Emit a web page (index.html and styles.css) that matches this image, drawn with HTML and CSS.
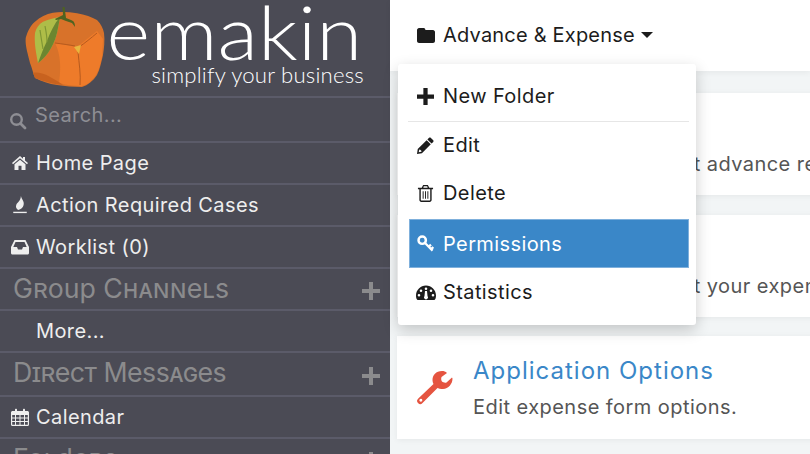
FILE: index.html
```html
<!DOCTYPE html>
<html lang="en">
<head>
<meta charset="utf-8">
<title>emakin</title>
<link rel="stylesheet" href="styles.css">
</head>
<body>
<div class="app">
  <aside class="sidebar">
    <div class="brand">
      <svg class="fruit" viewBox="0 -2 82 84" width="82" height="84" aria-hidden="true">
        <path d="M.7 29C3 21 6 16 10 12.700C15 8 21 5 28 3.700C36 2.500 44 3 52 4.300C60 6 67 8 72 11C76 15 78 19 79 24C80 32 79 39 78 46C76 54 75 60 72 66C68 72 63 76 57 78C48 78 40 77 32 76C24 75 16 72 10 69C8 64 7 59 5 54C3 45 0 37 .7 29Z" fill="#d8722a"/>
        <path d="M30 34L52 38L72 22L78 30L77 48C75 56 74 61 71 66C67 72 62 76 57 77C48 77 40 76 34 74C36 60 36 46 30 34Z" fill="#ee7b2a"/>
        <path d="M8 64C16 62 26 68 38 76C28 75 17 72 10 69Z" fill="#c8621f"/>
        <path d="M30 34C38 35 45 36 50 37M54 38C60 34 66 29 72 24M53 43C54 54 56 66 55 76" fill="none" stroke="#b65a1e" stroke-width="1"/>
        <path d="M49 38L56 36L54 45Z" fill="#e7b63e"/>
        <path d="M13 54C11 44 9 33 10 24C11 19 14 15 18 12.700C24 10 30 9 35 8C34 14 33 19 32 24C30 32 27 38 23 44C20 48 16 52 13 54Z" fill="#aebd48"/>
        <path d="M35 8C34 14 33 19 32 24C30 32 27 38 23 44C20 48 16 52 13 54C16 46 18 40 22 32C25 24 29 15 35 8Z" fill="#6c8630"/>
        <path d="M15 21C16 28 17 34 18 40M20 17C21 22 22 28 22 33" fill="none" stroke="#7f9634" stroke-width="1.200"/>
        <path d="M30 10L38 6L37.500 -2H39.500L41 9L46 11C49 12 50 14 50 18L47 14L41 12L36 10L31 11Z" fill="#4f6320"/>
      </svg>
      <div class="wordmark">
        <span class="wordmark-name">emakin</span>
        <span class="wordmark-tag">simplify your business</span>
      </div>
    </div>
    <div class="search">
      <svg class="search-icon" viewBox="0 0 18 18" width="18" height="18" aria-hidden="true"><circle cx="7.500" cy="7.500" r="5.300" fill="none" stroke="currentColor" stroke-width="2.400"/><path d="M11.500 11.500L16 16" stroke="currentColor" stroke-width="2.800" stroke-linecap="round"/></svg>
      <span>Search...</span>
    </div>
    <a class="nav-row"><svg class="nav-icon" viewBox="0 0 18 16" aria-hidden="true"><path d="M9 1L1 8L2 9.300L9 3.300L16 9.300L17 8L14 5.400V2H12V3.700ZM9 4.700L3.500 9.300V15H7.500V10.800H10.500V15H14.500V9.300Z" fill="currentColor"/></svg><span>Home Page</span></a>
    <a class="nav-row"><svg class="nav-icon" viewBox="0 0 18 20" aria-hidden="true"><path d="M10 0C11 4 14 6 13 10C12.500 13 10 15 7 15.500C5 14.500 3.800 12 5 9.500C6 7.500 10 5 10 0Z" fill="currentColor"/><rect x="1.500" y="17.500" width="15" height="1.500" fill="currentColor"/></svg><span>Action Required Cases</span></a>
    <a class="nav-row"><svg class="nav-icon" viewBox="0 0 18 16" aria-hidden="true"><path fill-rule="evenodd" d="M3.500 1H14.500L18 8V14C18 15 17 15.500 16.500 15.500H1.500C1 15.500 0 15 0 14V8ZM4.500 3L2.300 8H6L7 10.500H11L12 8H15.700L13.500 3Z" fill="currentColor"/></svg><span>Worklist (0)</span></a>
    <div class="nav-head"><span>Group Channels</span><svg class="head-plus" viewBox="0 0 20 20" aria-hidden="true"><path d="M8 1H12V8H19V12H12V19H8V12H1V8H8Z" fill="currentColor"/></svg></div>
    <a class="nav-row nav-row-indent"><span>More...</span></a>
    <div class="nav-head nav-head-tall"><span>Direct Messages</span><svg class="head-plus" viewBox="0 0 20 20" aria-hidden="true"><path d="M8 1H12V8H19V12H12V19H8V12H1V8H8Z" fill="currentColor"/></svg></div>
    <a class="nav-row"><svg class="nav-icon" viewBox="0 0 18 18" aria-hidden="true"><path fill-rule="evenodd" d="M1.500 3H4V1.500C4 .5 6 .5 6 1.500V3H12V1.500C12 .5 14 .5 14 1.500V3H16.500C17 3 18 3.500 18 4.500V16.500C18 17.500 17 18 16.500 18H1.500C1 18 0 17.500 0 16.500V4.500C0 3.500 1 3 1.500 3ZM1.200 7V9.500H4V7ZM5 7V9.500H8.500V7ZM9.500 7V9.500H13V7ZM14 7V9.500H16.800V7ZM1.200 10.500V13H4V10.500ZM5 10.500V13H8.500V10.500ZM9.500 10.500V13H13V10.500ZM14 10.500V13H16.800V10.500ZM1.200 14V16.800H4V14ZM5 14V16.800H8.500V14ZM9.500 14V16.800H13V14ZM14 14V16.800H16.800V14Z" fill="currentColor"/></svg><span>Calendar</span></a>
    <div class="nav-head"><span>Folders</span><svg class="head-plus" viewBox="0 0 20 20" aria-hidden="true"><path d="M8 1H12V8H19V12H12V19H8V12H1V8H8Z" fill="currentColor"/></svg></div>
  </aside>
  <main class="main">
    <header class="topbar">
      <svg class="top-folder" viewBox="0 0 18 15" aria-hidden="true"><path d="M2 0H6.500C7.500 0 8 .5 8.300 1.500L8.500 2H16C17 2 18 3 18 4V13C18 14 17 15 16 15H2C1 15 0 14 0 13V2C0 1 1 0 2 0Z" fill="currentColor"/></svg>
      <span>Advance &amp; Expense</span>
      <span class="caret"></span>
    </header>
    <section class="cards">
      <article class="card">
        <svg class="card-icon" viewBox="0 0 36 36" aria-hidden="true"></svg>
        <div class="card-body"><h2 class="card-title">Advance</h2><p class="card-text">Enter, track and submit advance requests.</p></div>
      </article>
      <article class="card">
        <svg class="card-icon" viewBox="0 0 36 36" aria-hidden="true"></svg>
        <div class="card-body"><h2 class="card-title">Expense</h2><p class="card-text">Enter, track and submit your expenses.</p></div>
      </article>
      <article class="card">
        <svg class="card-icon" viewBox="0 0 36 36" aria-hidden="true"><path fill-rule="evenodd" d="M25 0C19 0 15.500 4 15.500 9C15.500 10.500 16 12 16.500 13L1.300 27.500C-.5 29.300 -.3 30.500 1 32C2.500 33.500 4 33.700 5.500 32L20.500 17C22.500 18 24 18.300 26 18C31.500 17.500 35.500 13 35.500 7.500L35 6.500L29.500 11.500C28 12 26 11.500 25 10.500C24 9 24 8 24.500 6L30 2C28.500 .5 27 0 25 0ZM3.800 27.800A1.500 1.500 0 1 0 3.900 30.800A1.500 1.500 0 1 0 3.800 27.800Z" fill="currentColor"/></svg>
        <div class="card-body"><h2 class="card-title">Application Options</h2><p class="card-text">Edit expense form options.</p></div>
      </article>
    </section>
    <nav class="menu">
      <a class="menu-item menu-item-first"><svg class="menu-icon" viewBox="0 0 16 16" aria-hidden="true"><path d="M6 0H10V6H16V10H10V16H6V10H0V6H6Z" fill="currentColor"/></svg><span>New Folder</span></a>
      <div class="menu-divider"></div>
      <a class="menu-item"><svg class="menu-icon" viewBox="0 0 18 18" aria-hidden="true"><path d="M12.800 .8C13.300 .3 14 .3 14.500 .8L17.200 3.500C17.700 4 17.700 4.700 17.200 5.200L15.400 7L11 2.600ZM10.200 3.400L14.600 7.800L5.200 17.200L0 18L.8 12.800ZM2.400 13.400L1.800 16.200L4.600 15.600L4.800 14.900L3.100 13.200Z" fill="currentColor" fill-rule="evenodd"/></svg><span>Edit</span></a>
      <a class="menu-item"><svg class="menu-icon" viewBox="0 0 16 18" aria-hidden="true"><path fill-rule="evenodd" d="M5.500 0H10.500L12 3H16V4.500H14.500V16C14.500 17 13.500 18 12.500 18H3.500C2.500 18 1.500 17 1.500 16V4.500H0V3H4ZM6.200 1.300L5.700 3H10.300L9.800 1.300ZM3 4.500V16C3 16.300 3.300 16.500 3.500 16.500H12.500C12.700 16.500 13 16.300 13 16V4.500ZM5 6.500H6V14.500H5ZM7.500 6.500H8.500V14.500H7.500ZM10 6.500H11V14.500H10Z" fill="currentColor"/></svg><span>Delete</span></a>
      <a class="menu-item menu-item-active"><svg class="menu-icon" viewBox="0 0 18 18" aria-hidden="true"><circle cx="5.500" cy="5.500" r="3.900" fill="none" stroke="currentColor" stroke-width="2.600"/><path d="M8.500 8.500L16.500 16.500M12.500 12.500L14.800 10.200M15 15L17.300 12.700" fill="none" stroke="currentColor" stroke-width="2.400"/></svg><span>Permissions</span></a>
      <a class="menu-item"><svg class="menu-icon menu-icon-wide" viewBox="0 0 20 16" aria-hidden="true"><path fill-rule="evenodd" d="M10 1C4.500 1 0 5.500 0 11C0 12.500 .3 14 1 15C1.300 15.500 2 15.500 2.500 15.500H17.500C18 15.500 18.700 15.500 19 15C19.700 14 20 12.500 20 11C20 5.500 15.500 1 10 1ZM10 3A1.300 1.300 0 1 1 10 5.600A1.300 1.300 0 1 1 10 3ZM5 5A1.300 1.300 0 1 1 5 7.600A1.300 1.300 0 1 1 5 5ZM15 5A1.300 1.300 0 1 1 15 7.600A1.300 1.300 0 1 1 15 5ZM3 9.500A1.300 1.300 0 1 1 3 12.100A1.300 1.300 0 1 1 3 9.500ZM17 9.500A1.300 1.300 0 1 1 17 12.100A1.300 1.300 0 1 1 17 9.500ZM9 6.500H11L11.500 11.500A2 2 0 1 1 8.500 11.500Z" fill="currentColor"/></svg><span>Statistics</span></a>
    </nav>
  </main>
</div>
</body>
</html>
```
FILE: styles.css
```css
* { box-sizing: border-box; }
html, body { margin: 0; height: 100%; overflow: hidden; }
body { font-family: Inter, "Noto Sans", sans-serif; }
.app { display: flex; width: 810px; height: 454px; overflow: hidden; }

.sidebar { width: 390px; flex: none; background: #4b4b55; color: #eeeeee; display: flex; flex-direction: column; font-size: 20px; letter-spacing: .4px; }
.brand { height: 98px; flex: none; display: flex; align-items: flex-start; padding: 7px 0 0 25px; border-bottom: 2px solid #5b5b69; }
.fruit { flex: none; }
.wordmark { display: flex; flex-direction: column; align-items: flex-end; width: 259px; margin-left: -2px; color: #ffffff; }
.wordmark-name { font-family: Lato, sans-serif; font-weight: 300; font-size: 74px; line-height: 62px; letter-spacing: 0; transform: scaleX(1.130); transform-origin: right center; margin: -6px 2px 0 0; }
.wordmark-tag { font-family: Lato, sans-serif; font-weight: 300; font-size: 22.200px; line-height: 22px; letter-spacing: .2px; margin-top: 1px; }
.search { height: 45px; flex: none; display: flex; align-items: flex-start; gap: 8px; padding: 5px 0 0 9px; color: #8e8e94; border-bottom: 2px solid #5b5b69; }
.search-icon { margin-top: 9px; flex: none; }
.nav-row { height: 42px; flex: none; display: flex; align-items: center; gap: 7px; padding: 0 0 0 11px; border-bottom: 2px solid #5b5b69; }
.nav-row-indent { padding-left: 36px; }
.nav-icon { width: 18px; height: 18px; flex: none; }
.nav-head { height: 42px; flex: none; display: flex; align-items: center; justify-content: space-between; padding: 0 9px 2px 13px; color: #8b8b8d; font-size: 26.700px; letter-spacing: 0; font-variant: small-caps; border-bottom: 2px solid #5b5b69; }
.nav-head-tall { height: 44px; padding-bottom: 4px; letter-spacing: -.5px; }
.head-plus { width: 20px; height: 20px; margin-top: 6px; flex: none; }
.nav-head-tall .head-plus { margin-top: 8px; }

.main { flex: 1; min-width: 0; position: relative; background: #f2f5f6; }
.topbar { height: 71px; background: #ffffff; color: #1c1c1c; display: flex; align-items: center; padding: 0 0 1px 27px; font-size: 20px; letter-spacing: .2px; box-shadow: 0 2px 6px rgba(0,0,0,.05); }
.top-folder { width: 18px; height: 15px; margin-right: 8px; flex: none; }
.caret { width: 0; height: 0; margin-left: 6px; border-left: 6px solid transparent; border-right: 6px solid transparent; border-top: 6px solid currentColor; }
.cards { display: flex; flex-direction: column; gap: 20px; padding: 22px 0 0 7px; }
.card { height: 102px; width: 430px; background: #ffffff; display: flex; align-items: center; padding-left: 20px; box-shadow: 0 1px 6px rgba(0,0,0,.06); flex: none; }
.card:last-child { height: 103px; margin-top: -1px; }
.card-icon { width: 36px; height: 36px; flex: none; color: #e55440; margin-top: 3px; }
.card-body { margin-left: 20px; white-space: nowrap; }
.card-title { margin: 0 0 2px; font-size: 24px; line-height: 30px; font-weight: 400; color: #3a87c8; letter-spacing: 1px; }
.card-text { margin: 9px 0 0; font-size: 20px; line-height: 24px; color: #555555; letter-spacing: .45px; }

.menu { position: absolute; left: 8px; top: 64px; width: 298px; height: 261px; background: #ffffff; border-radius: 3px; padding: 8px 7px 0 11px; color: #1c1c1c; font-size: 20px; letter-spacing: .4px; box-shadow: 0 5px 15px rgba(0,0,0,.2); display: flex; flex-direction: column; }
.menu-item { height: 48px; flex: none; display: flex; align-items: center; padding-left: 8px; gap: 7px; }
.menu-item-first { height: 49px; padding-bottom: 1px; }
.menu-divider { height: 1px; background: #e6e6e6; margin: 0 0 -1px -1px; flex: none; }
.menu-item-active { height: 49px; margin-top: 2px; background: #3a87c8; border: 1px solid #7fb0dc; padding-left: 7px; color: #ffffff; }
.menu-icon { width: 17px; height: 17px; flex: none; margin-right: 2px; }
.menu-icon-wide { width: 20px; margin-right: 0; margin-left: -1px; }
```
